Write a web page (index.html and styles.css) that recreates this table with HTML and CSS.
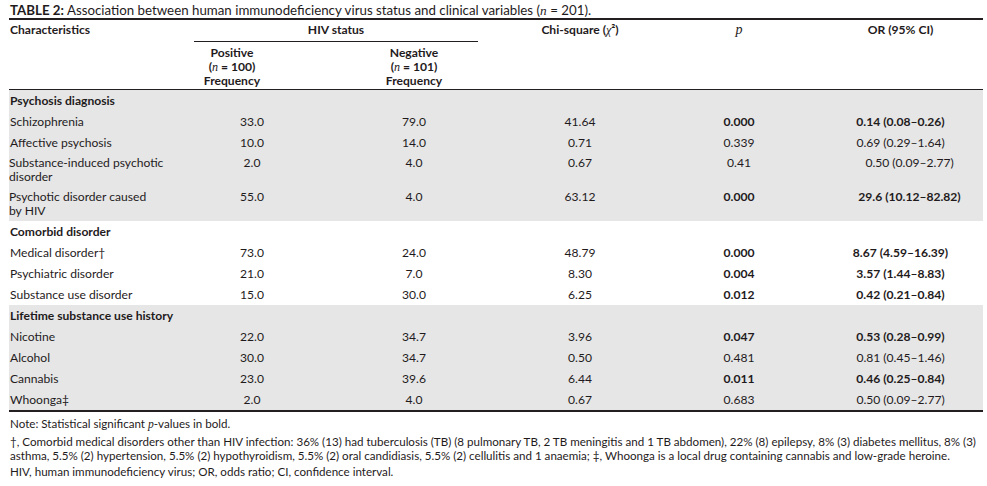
FILE: index.html
```html
<!DOCTYPE html>
<html lang="en">
<head>
<meta charset="utf-8">
<title>Table 2</title>
<link rel="stylesheet" href="styles.css">
</head>
<body>
<p class="caption"><b>TABLE 2:</b> Association between human immunodeficiency virus status and clinical variables (<i class="m">n</i> = 201).</p>
<table class="tbl">
  <colgroup>
    <col class="c1"><col class="c2"><col class="c3"><col class="c4"><col class="c5"><col class="c6">
  </colgroup>
  <thead>
    <tr class="h1">
      <th class="left" rowspan="2">Characteristics</th>
      <th colspan="2" class="hiv"><div class="hiv-in">HIV status</div></th>
      <th rowspan="2">Chi-square (<i class="m">χ</i>²)</th>
      <th rowspan="2"><i class="m p">p</i></th>
      <th rowspan="2" class="or">OR (95% CI)</th>
    </tr>
    <tr class="h2">
      <th class="pos">Positive<br>(<i class="m">n</i> = 100)<br>Frequency</th>
      <th>Negative<br>(<i class="m">n</i> = 101)<br>Frequency</th>
    </tr>
  </thead>
  <tbody class="shade">
    <tr><td class="sec" colspan="6">Psychosis diagnosis</td></tr>
    <tr><td>Schizophrenia</td><td>33.0</td><td>79.0</td><td>41.64</td><td class="b">0.000</td><td class="b or">0.14 (0.08–0.26)</td></tr>
    <tr><td>Affective psychosis</td><td>10.0</td><td>14.0</td><td>0.71</td><td>0.339</td><td class="or">0.69 (0.29–1.64)</td></tr>
    <tr class="two"><td>Substance-induced psychotic<br>disorder</td><td>2.0</td><td>4.0</td><td>0.67</td><td>0.41</td><td class="or">0.50 (0.09–2.77)</td></tr>
    <tr class="two"><td>Psychotic disorder caused<br>by HIV</td><td>55.0</td><td>4.0</td><td>63.12</td><td class="b">0.000</td><td class="b or">29.6 (10.12–82.82)</td></tr>
  </tbody>
  <tbody>
    <tr><td class="sec" colspan="6">Comorbid disorder</td></tr>
    <tr><td>Medical disorder†</td><td>73.0</td><td>24.0</td><td>48.79</td><td class="b">0.000</td><td class="b or">8.67 (4.59–16.39)</td></tr>
    <tr><td>Psychiatric disorder</td><td>21.0</td><td>7.0</td><td>8.30</td><td class="b">0.004</td><td class="b or">3.57 (1.44–8.83)</td></tr>
    <tr><td>Substance use disorder</td><td>15.0</td><td>30.0</td><td>6.25</td><td class="b">0.012</td><td class="b or">0.42 (0.21–0.84)</td></tr>
  </tbody>
  <tbody class="shade last">
    <tr><td class="sec" colspan="6">Lifetime substance use history</td></tr>
    <tr><td>Nicotine</td><td>22.0</td><td>34.7</td><td>3.96</td><td class="b">0.047</td><td class="b or">0.53 (0.28–0.99)</td></tr>
    <tr><td>Alcohol</td><td>30.0</td><td>34.7</td><td>0.50</td><td>0.481</td><td class="or">0.81 (0.45–1.46)</td></tr>
    <tr><td>Cannabis</td><td>23.0</td><td>39.6</td><td>6.44</td><td class="b">0.011</td><td class="b or">0.46 (0.25–0.84)</td></tr>
    <tr><td>Whoonga‡</td><td>2.0</td><td>4.0</td><td>0.67</td><td>0.683</td><td class="or">0.50 (0.09–2.77)</td></tr>
  </tbody>
</table>
<div class="notes">
  <p class="n1">Note: Statistical significant <i class="m">p</i>-values in bold.</p>
  <p class="n2">†, Comorbid medical disorders other than HIV infection: 36% (13) had tuberculosis (TB) (8 pulmonary TB, 2 TB meningitis and 1 TB abdomen), 22% (8) epilepsy, 8% (3) diabetes mellitus, 8% (3) asthma, 5.5% (2) hypertension, 5.5% (2) hypothyroidism, 5.5% (2) oral candidiasis, 5.5% (2) cellulitis and 1 anaemia; ‡, Whoonga is a local drug containing cannabis and low-grade heroine.</p>
  <p>HIV, human immunodeficiency virus; OR, odds ratio; CI, confidence interval.</p>
</div>
</body>
</html>
```
FILE: styles.css
```css
html, body {
  background: #ffffff;
}
body {
  margin: 3px 4px 0 9px;
  font-family: Lato, "Noto Sans", sans-serif;
  color: #1f1b1c;
  font-size: 12px;
}
.caption {
  margin: 0 0 0 1px;
  font-size: 13.3px;
  line-height: 15px;
}
.m {
  font-family: "Liberation Serif", serif;
  font-style: italic;
  font-weight: 400;
}
.p {
  font-size: 14px;
}
.tbl {
  width: 974px;
  border-collapse: collapse;
  table-layout: fixed;
  font-size: 12.1px;
}
.c1 { width: 185px; }
.c2 { width: 116px; }
.c3 { width: 208px; }
.c4 { width: 124px; }
.c5 { width: 194px; }
.c6 { width: 147px; }
.tbl th {
  font-weight: 700;
  vertical-align: top;
  text-align: center;
  padding: 0;
  line-height: 14px;
}
.tbl .h1 th {
  border-top: 2px solid #231f20;
  padding-top: 3px;
  height: 18px;
}
.hiv-in {
  margin-right: 40px;
  border-bottom: 1px solid #231f20;
  padding-bottom: 3px;
  height: 15px;
}
.tbl th.left {
  text-align: left;
  padding-left: 1px;
}
.tbl .h2 th {
  padding-top: 4px;
  padding-bottom: 1px;
}
.tbl .h2 th.pos {
  padding-right: 40px;
}
.tbl thead tr.h2 {
  border-bottom: 1px solid #231f20;
}
.tbl td {
  padding: 4px 0 3px;
  line-height: 14px;
  vertical-align: top;
  text-align: center;
}
.tbl tr.two td {
  padding: 3px 0 3px;
}
.tbl td:first-child {
  text-align: left;
  padding-left: 1px;
}
.tbl td.sec {
  font-weight: 700;
}
.tbl td.b {
  font-weight: 700;
}
.tbl th.or,
.tbl td.or {
  padding-right: 18px;
}
.shade td {
  background: #e6e6e6;
}
.last tr:last-child {
  border-bottom: 2px solid #231f20;
}
.notes {
  font-size: 11.6px;
  line-height: 14px;
  padding-top: 5px;
}
.notes p {
  margin: 0 0 0 1px;
}
.notes .n1 {
  margin-bottom: 3px;
}
.notes .n2 {
  margin-bottom: 2px;
}
```
